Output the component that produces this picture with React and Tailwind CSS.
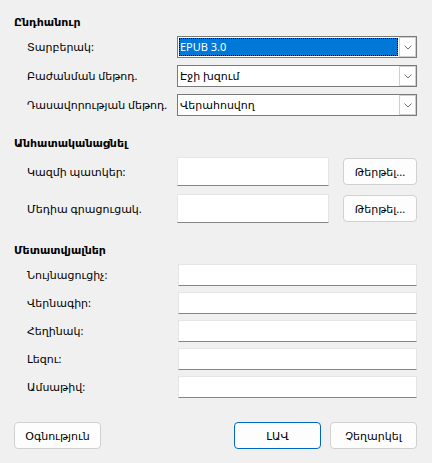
import { useState } from "react";

const font = { fontFamily: '"Noto Sans", "DejaVu Sans", sans-serif' };

function Chevron() {
  return (
    <svg width="8" height="5" viewBox="0 0 8 5" className="text-gray-500">
      <path d="M0.5 0.5 L4 4 L7.5 0.5" fill="none" stroke="currentColor" strokeWidth="1" />
    </svg>
  );
}

function Combo({ value, focused }) {
  return (
    <div className="flex h-[22px] border border-[#7a7a7a] bg-white">
      <div className="flex-1 p-px min-w-0">
        <div
          className={
            focused
              ? "h-full flex items-center bg-[#0078d7] text-white outline-1 outline-dotted outline-black -outline-offset-1 px-px"
              : "h-full flex items-center text-black px-px"
          }
        >
          {value}
        </div>
      </div>
      <div className="w-[17px] flex items-center justify-center border border-[#cfcfcf] bg-white">
        <Chevron />
      </div>
    </div>
  );
}

function TextBox({ tall }) {
  return (
    <div
      className={`${tall ? "h-[29px]" : "h-[22px]"} bg-white border border-[#e5e5e5] border-b-[#858585]`}
    />
  );
}

function Btn({ children, primary, className = "" }) {
  return (
    <button
      className={`h-[27px] rounded-[4px] bg-[#fdfdfd] text-[11px] text-black border whitespace-nowrap ${
        primary ? "border-[#0067c0]" : "border-[#d0d0d0]"
      } ${className}`}
    >
      {children}
    </button>
  );
}

export default function App() {
  const [fields] = useState(["Նույնացուցիչ:", "Վերնագիր:", "Հեղինակ:", "Լեզու:", "Ամսաթիվ:"]);

  return (
    <div
      className="w-[432px] h-[463px] bg-[#f0f0f0] text-[11px] leading-[16px] text-black overflow-hidden whitespace-nowrap pt-[14px] pl-[14px] pr-[15px]"
      style={font}
    >
      <div className="font-bold">Ընդհանուր</div>
      <div className="mt-[6px] grid grid-cols-[150px_1fr] pl-[13px] gap-y-[7px] items-center">
        <span>Տարբերակ:</span>
        <Combo value="EPUB 3.0" focused />
        <span>Բաժանման մեթոդ.</span>
        <Combo value="Էջի խզում" />
        <span>Դասավորության մեթոդ.</span>
        <Combo value="Վերահոսվող" />
      </div>

      <div className="mt-[19px] font-bold">Անհատականացնել</div>
      <div className="mt-[6px] grid grid-cols-[150px_152px_1fr] pl-[13px] gap-y-[8px] items-center">
        <span>Կազմի պատկեր:</span>
        <TextBox tall />
        <div className="flex justify-end">
          <Btn className="w-[74px]">Թերթել...</Btn>
        </div>
        <span>Մեդիա գրացուցակ.</span>
        <TextBox tall />
        <div className="flex justify-end">
          <Btn className="w-[74px]">Թերթել...</Btn>
        </div>
      </div>

      <div className="mt-[19px] font-bold">Մետատվյալներ</div>
      <div className="mt-[6px] grid grid-cols-[151px_1fr] pl-[13px] gap-y-[6px] items-center">
        {fields.map((f) => (
          <>
            <span key={f}>{f}</span>
            <TextBox key={f + "-box"} />
          </>
        ))}
      </div>

      <div className="mt-[24px] flex items-center">
        <Btn className="w-[87px]">Օգնություն</Btn>
        <div className="flex-1" />
        <Btn primary className="w-[87px]">ԼԱՎ</Btn>
        <Btn className="w-[87px] ml-[9px]">Չեղարկել</Btn>
      </div>
    </div>
  );
}
